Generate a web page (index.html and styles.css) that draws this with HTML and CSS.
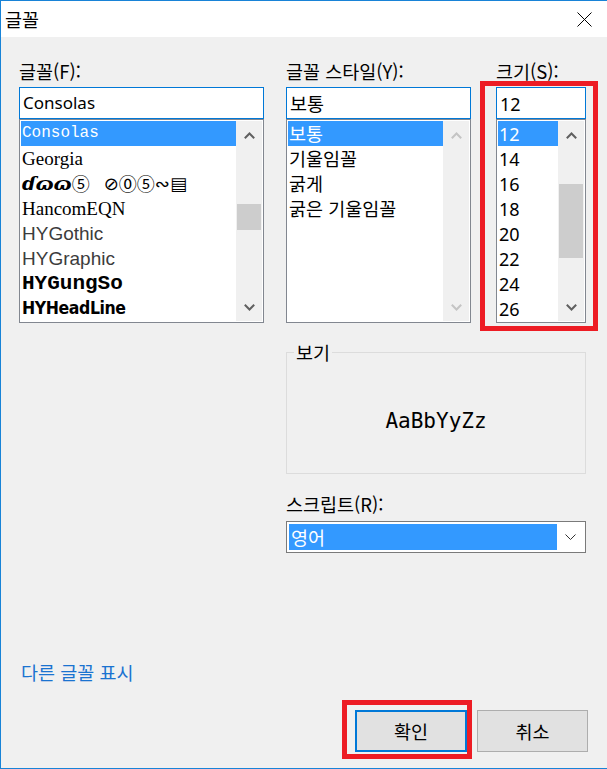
FILE: index.html
```html
<!DOCTYPE html>
<html lang="ko">
<head>
<meta charset="utf-8">
<title>글꼴</title>
<link rel="stylesheet" href="styles.css">
</head>
<body>
<div class="window">
  <div class="titlebar">
    <span class="title ko">글꼴</span>
    <svg class="close" width="15" height="15" viewBox="0 0 15 15"><path d="M0.5 0.5 L14.5 14.5 M14.5 0.5 L0.5 14.5" stroke="#000" stroke-width="1" fill="none"/></svg>
  </div>
  <div class="content">
    <div class="main">
      <div class="col col-font">
        <div class="label ko">글꼴(F):</div>
        <div class="input">Consolas</div>
        <div class="list">
          <ul class="items">
            <li class="sel f-consolas">Consolas</li>
            <li class="f-georgia">Georgia</li>
            <li class="f-symbol"><span class="sym-a">ɗɷɷ</span><span class="sym-b">⑤</span><span class="sym-gap"></span><span class="sym-c">⊘</span><span class="sym-b">⓪⑤</span><span class="sym-c">∾▤</span></li>
            <li class="f-hancom">HancomEQN</li>
            <li class="f-gothic">HYGothic</li>
            <li class="f-gothic">HYGraphic</li>
            <li class="f-gungso">HYGungSo</li>
            <li class="f-headline">HYHeadLine</li>
          </ul>
          <div class="scrollbar">
            <div class="sb-btn"><svg width="11" height="7" viewBox="0 0 11 7"><polyline points="0.8,6.2 5.5,1.5 10.2,6.2" fill="none" stroke="#606060" stroke-width="2"/></svg></div>
            <div class="sb-track"><div class="thumb thumb-font"></div></div>
            <div class="sb-btn"><svg width="11" height="7" viewBox="0 0 11 7"><polyline points="0.8,0.8 5.5,5.5 10.2,0.8" fill="none" stroke="#606060" stroke-width="2"/></svg></div>
          </div>
        </div>
      </div>
      <div class="right">
        <div class="top-row">
          <div class="col col-style">
            <div class="label ko">글꼴 스타일(Y):</div>
            <div class="input ko">보통</div>
            <div class="list">
              <ul class="items ko">
                <li class="sel">보통</li>
                <li>기울임꼴</li>
                <li>굵게</li>
                <li>굵은 기울임꼴</li>
              </ul>
              <div class="scrollbar">
                <div class="sb-btn"><svg width="11" height="7" viewBox="0 0 11 7"><polyline points="0.8,6.2 5.5,1.5 10.2,6.2" fill="none" stroke="#c4c4c4" stroke-width="2"/></svg></div>
                <div class="sb-track"></div>
                <div class="sb-btn"><svg width="11" height="7" viewBox="0 0 11 7"><polyline points="0.8,0.8 5.5,5.5 10.2,0.8" fill="none" stroke="#c4c4c4" stroke-width="2"/></svg></div>
              </div>
            </div>
          </div>
          <div class="col col-size">
            <div class="label ko">크기(S):</div>
            <div class="input nums-input">12</div>
            <div class="list">
              <ul class="items nums">
                <li class="sel">12</li>
                <li>14</li>
                <li>16</li>
                <li>18</li>
                <li>20</li>
                <li>22</li>
                <li>24</li>
                <li>26</li>
              </ul>
              <div class="scrollbar">
                <div class="sb-btn"><svg width="11" height="7" viewBox="0 0 11 7"><polyline points="0.8,6.2 5.5,1.5 10.2,6.2" fill="none" stroke="#606060" stroke-width="2"/></svg></div>
                <div class="sb-track"><div class="thumb thumb-size"></div></div>
                <div class="sb-btn"><svg width="11" height="7" viewBox="0 0 11 7"><polyline points="0.8,0.8 5.5,5.5 10.2,0.8" fill="none" stroke="#606060" stroke-width="2"/></svg></div>
              </div>
            </div>
          </div>
        </div>
        <div class="group">
          <span class="legend ko">보기</span>
          <span class="sample">AaBbYyZz</span>
        </div>
        <div class="label ko script-label">스크립트(R):</div>
        <div class="dropdown">
          <div class="dd-value ko">영어</div>
          <div class="dd-arrow"><svg width="11" height="6" viewBox="0 0 11 6"><polyline points="0.5,0.5 5.5,5.5 10.5,0.5" fill="none" stroke="#333" stroke-width="1"/></svg></div>
        </div>
      </div>
    </div>
    <a class="more ko">다른 글꼴 표시</a>
    <div class="buttons">
      <button class="btn ko btn-default">확인</button>
      <button class="btn ko">취소</button>
    </div>
  </div>
  <div class="mark mark-size"></div>
  <div class="mark mark-ok"></div>
</div>
</body>
</html>
```
FILE: styles.css
```css
* { box-sizing: border-box; margin: 0; padding: 0; }
html, body { width: 607px; height: 769px; overflow: hidden; }
body {
  background: #f0f0f0;
  font-family: "Noto Sans", "Noto Sans CJK KR", sans-serif;
  font-size: 17px;
  color: #000;
}
.ko {
  font-family: "Noto Sans CJK KR", "Noto Sans", sans-serif;
  font-size: 18.5px;
}
.window {
  position: relative;
  width: 607px;
  height: 769px;
  border-top: 1px solid #1883d7;
  border-left: 1px solid #1883d7;
  border-bottom: 1px solid #1883d7;
  display: flex;
  flex-direction: column;
}
.titlebar {
  height: 36px;
  background: #fff;
  display: flex;
  align-items: center;
  justify-content: space-between;
  padding: 0 15px 0 4px;
}
.title { line-height: 24px; }
.close { display: block; }
.content {
  flex: 1;
  display: flex;
  flex-direction: column;
  padding: 22px 0 16px 18px;
}
.main { display: flex; gap: 22px; }
.col-font { width: 245px; }
.right { width: 300px; display: flex; flex-direction: column; }
.top-row { display: flex; gap: 25px; }
.col-style { width: 185px; }
.col-size { width: 90px; }
.label {
  height: 24px;
  line-height: 24px;
  margin-bottom: 4px;
  white-space: nowrap;
}
.input {
  height: 32px;
  border: 1px solid #0078d7;
  background: #fff;
  padding: 0 3px;
  line-height: 30px;
  white-space: nowrap;
}
.nums-input { font-size: 18px; line-height: 32px; }
.list {
  height: 204px;
  border: 1px solid #828790;
  background: #fff;
  padding: 1px;
  display: flex;
}
.items { flex: 1; list-style: none; overflow: hidden; }
.items li {
  height: 25px;
  line-height: 25px;
  padding-left: 1px;
  white-space: nowrap;
}
.items.nums li { font-size: 18px; line-height: 27px; }
.items li.sel { background: #3399ff; color: #fff; }
.f-consolas { font-family: "Liberation Mono", monospace; font-size: 16px; }
.f-georgia { font-family: "Liberation Serif", serif; font-size: 19px; }
.f-hancom { font-family: "Liberation Serif", serif; font-size: 19px; }
.f-gothic { font-family: "Liberation Sans", sans-serif; font-size: 19px; color: #3c3c3c; }
.f-gungso { font-family: "Liberation Mono", monospace; font-size: 21px; font-weight: bold; }
.f-headline { font-family: "DejaVu Sans Condensed", "DejaVu Sans", sans-serif; font-size: 17.5px; font-weight: bold; letter-spacing: -0.4px; }
.f-symbol { display: flex; align-items: center; }
.sym-a { font-family: "DejaVu Serif", serif; font-weight: bold; font-style: italic; font-size: 19px; }
.sym-b { font-family: "Noto Sans CJK KR", sans-serif; font-size: 18px; }
.sym-c { font-family: "DejaVu Sans", sans-serif; font-size: 18px; }
.sym-gap { width: 14px; }
.scrollbar {
  width: 26px;
  background: #f0f0f0;
  display: flex;
  flex-direction: column;
}
.sb-btn {
  height: 28px;
  display: flex;
  align-items: center;
  justify-content: center;
}
.sb-btn svg { display: block; }
.sb-track { flex: 1; padding: 0 1px; }
.thumb { background: #cdcdcd; }
.thumb-font { margin-top: 55px; height: 26px; }
.thumb-size { margin-top: 35px; height: 74px; }
.group {
  position: relative;
  margin-top: 29px;
  height: 122px;
  border: 1px solid #dcdcdc;
  display: flex;
  align-items: center;
  justify-content: center;
  padding-top: 16px;
}
.legend {
  position: absolute;
  top: -13px;
  left: 7px;
  padding: 0 2px;
  background: #f0f0f0;
  line-height: 24px;
}
.sample {
  font-family: "DejaVu Sans Mono", monospace;
  font-size: 21px;
}
.script-label { margin-top: 18px; margin-bottom: 5px; }
.dropdown {
  height: 32px;
  border: 1px solid #7a7a7a;
  background: #fff;
  padding: 2px;
  display: flex;
}
.dd-value {
  width: 268px;
  background: #3399ff;
  color: #fff;
  line-height: 26px;
  padding-left: 2px;
}
.dd-arrow {
  flex: 1;
  display: flex;
  align-items: center;
  justify-content: center;
}
.dd-arrow svg { display: block; }
.more {
  margin-top: auto;
  margin-bottom: 26px;
  padding-left: 2px;
  line-height: 24px;
  color: #1a73d0;
  align-self: flex-start;
}
.buttons {
  display: flex;
  justify-content: flex-end;
  gap: 10px;
  padding-right: 19px;
}
.btn {
  width: 111px;
  height: 42px;
  background: #e1e1e1;
  border: 1px solid #adadad;
  color: #000;
}
.btn-default { width: 112px; border: 2px solid #0078d7; }
.mark {
  position: absolute;
  border: 5px solid #ed1c24;
  pointer-events: none;
}
.mark-size { left: 479px; top: 80px; width: 118px; height: 250px; }
.mark-ok { left: 341px; top: 699px; width: 130px; height: 59px; }
```
